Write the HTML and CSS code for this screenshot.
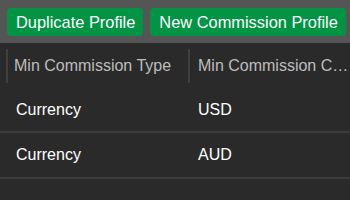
FILE: index.html
```html
<!DOCTYPE html>
<html lang="en">
<head>
  <meta charset="UTF-8" />
  <title>Commission Profiles</title>
  <link rel="stylesheet" href="styles.css">
</head>
<body>

<!-- Toolbar -->
<div class="toolbar">
  <button class="btn">Duplicate Profile</button>
  <button class="btn">New Commission Profile</button>
</div>

<!-- Grid -->
<div class="grid">
  <div class="grid-head">
    <div class="cell head-cell first">Min Commission Type</div>
    <div class="cell head-cell second">Min Commission Currency</div>
  </div>
  <div class="grid-row">
    <div class="cell first">Currency</div>
    <div class="cell second">USD</div>
  </div>
  <div class="grid-row">
    <div class="cell first">Currency</div>
    <div class="cell second">AUD</div>
  </div>
</div>

</body>
</html>
```

FILE: styles.css
```css
body {
  font-family: "Liberation Sans", Arial, sans-serif;
  background: #2a2a2a;
  margin: 0;
  width: 350px;
  height: 200px;
  overflow: hidden;
}
.toolbar {
  background: #555555;
  height: 43px;
  box-sizing: border-box;
  padding: 8px 7px;
  display: flex;
  gap: 7px;
  white-space: nowrap;
}
.btn {
  font-family: inherit;
  font-size: 16.4px;
  height: 28px;
  padding: 0 8px 0 9px;
  border: none;
  border-radius: 4px;
  background: #009444;
  color: #fff;
  flex-shrink: 0;
}
.grid {
  padding-left: 6px;
}
.grid-head,
.grid-row {
  display: flex;
  height: 45px;
  align-items: center;
}
.grid-row {
  box-sizing: border-box;
  margin-left: -6px;
  padding-left: 6px;
  border-bottom: 2px solid #3b3b3b;
}
.grid-row + .grid-row {
  height: 46px;
}
.cell {
  font-size: 16px;
  color: #ffffff;
  white-space: nowrap;
  overflow: hidden;
  text-overflow: ellipsis;
  box-sizing: border-box;
}
.first {
  width: 182px;
  padding-left: 10px;
  flex-shrink: 0;
}
.second {
  width: 162px;
  padding-left: 10px;
  flex-shrink: 0;
}
.head-cell {
  color: #bdbdbd;
  height: 34px;
  line-height: 34px;
  border-left: 2px solid #3f3f3f;
  padding-left: 6px;
}
.head-cell.second {
  padding-left: 8px;
}
```
